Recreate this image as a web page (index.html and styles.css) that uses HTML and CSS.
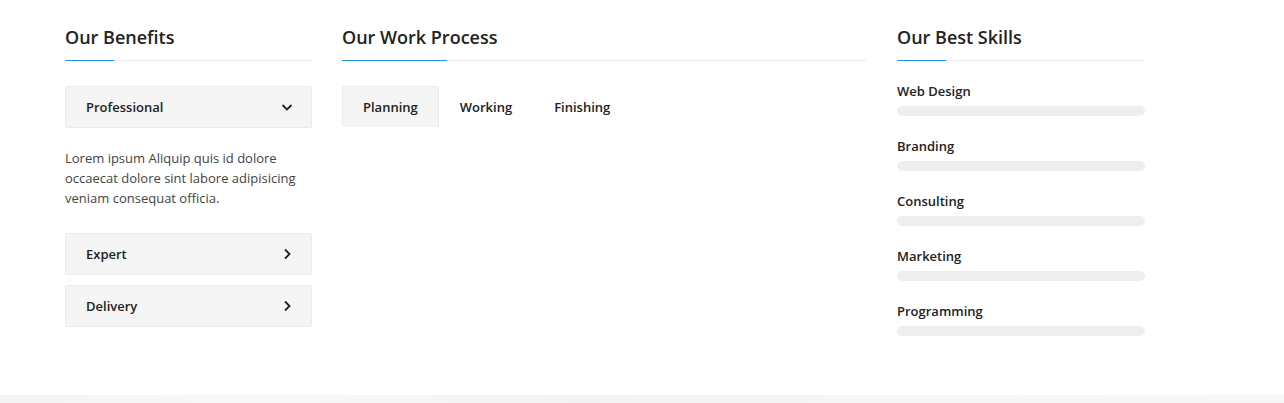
FILE: index.html
```html
<!DOCTYPE html>
<html>
<head>
<meta charset="utf-8">
<link rel="stylesheet" href="styles.css">
</head>
<body>
<section class="features">
  <div class="col col-benefits">
    <h3 class="title">Our Benefits</h3>
    <div class="acc-item open">
      <div class="acc-head"><span>Professional</span>
        <svg class="ico" width="14" height="14" viewBox="0 0 14 14"><path d="M2.5 5 L7 9.5 L11.5 5" fill="none" stroke="#222" stroke-width="1.8"/></svg>
      </div>
    </div>
    <p class="acc-body">Lorem ipsum Aliquip quis id dolore occaecat dolore sint labore adipisicing veniam consequat officia.</p>
    <div class="acc-item">
      <div class="acc-head"><span>Expert</span>
        <svg class="ico" width="14" height="14" viewBox="0 0 14 14"><path d="M5 2.5 L9.5 7 L5 11.5" fill="none" stroke="#222" stroke-width="1.8"/></svg>
      </div>
    </div>
    <div class="acc-item">
      <div class="acc-head"><span>Delivery</span>
        <svg class="ico" width="14" height="14" viewBox="0 0 14 14"><path d="M5 2.5 L9.5 7 L5 11.5" fill="none" stroke="#222" stroke-width="1.8"/></svg>
      </div>
    </div>
  </div>
  <div class="col col-process">
    <h3 class="title">Our Work Process</h3>
    <ul class="tabs">
      <li class="tab active">Planning</li>
      <li class="tab">Working</li>
      <li class="tab">Finishing</li>
    </ul>
  </div>
  <div class="col col-skills">
    <h3 class="title">Our Best Skills</h3>
    <div class="skill"><div class="skill-name">Web Design</div><div class="bar"></div></div>
    <div class="skill"><div class="skill-name">Branding</div><div class="bar"></div></div>
    <div class="skill"><div class="skill-name">Consulting</div><div class="bar"></div></div>
    <div class="skill"><div class="skill-name">Marketing</div><div class="bar"></div></div>
    <div class="skill"><div class="skill-name">Programming</div><div class="bar"></div></div>
  </div>
</section>
<div class="next-section"></div>
</body>
</html>
```
FILE: styles.css
```css
* { box-sizing: border-box; }
html, body { margin: 0; padding: 0; background: #fff; }
body {
  font-family: "Open Sans", "Liberation Sans", sans-serif;
  color: #222;
  height: 403px;
  overflow: hidden;
}
.features {
  display: grid;
  grid-template-columns: 247px 524px 249px;
  column-gap: 30px;
  padding: 25px 0 0 65px;
  height: 395px;
}
.col-skills { margin-left: 1px; }
.title {
  margin: 0 0 25px;
  font-size: 18px;
  font-weight: 600;
  line-height: 24px;
  color: #222;
  padding-bottom: 11px;
  border-bottom: 1px solid #ebebeb;
  position: relative;
}
.title::after {
  content: "";
  position: absolute;
  left: 0;
  bottom: -1px;
  width: 49px;
  height: 1px;
  background: #1e94e0;
}
.col-process .title::after { width: 105px; }
.acc-item {
  background: #f5f5f5;
  border: 1px solid #ebebeb;
  border-radius: 2px;
  margin-bottom: 10px;
}
.acc-head {
  height: 40px;
  display: flex;
  align-items: center;
  justify-content: space-between;
  padding: 0 17px 0 20px;
  font-size: 13px;
  font-weight: 600;
  color: #222;
}
.ico { display: block; }
.acc-item.open { margin-bottom: 0; }
.acc-body {
  margin: 20px 0 25px;
  font-size: 13px;
  line-height: 20px;
  color: #444;
}
.tabs {
  list-style: none;
  margin: 0;
  padding: 0;
  display: flex;
}
.tab {
  height: 41px;
  display: flex;
  align-items: center;
  padding: 0 20px;
  font-size: 13px;
  font-weight: 600;
  color: #222;
  border: 1px solid transparent;
  border-bottom: 0;
}
.tab.active {
  background: #f5f5f5;
  border-color: #ebebeb;
  border-radius: 2px 2px 0 0;
}
.skill { margin-bottom: 21px; }
.skill:first-of-type { margin-top: -4px; }
.skill-name {
  font-size: 13px;
  font-weight: 600;
  line-height: 18px;
  color: #222;
  margin-bottom: 6px;
}
.bar {
  height: 10px;
  border-radius: 5px;
  background: #eeeeee;
}
.next-section {
  height: 8px;
  background: linear-gradient(90deg, #f4f4f4 0%, #f8f8f8 20%, #f3f3f3 45%, #f6f6f6 70%, #f7f7f7 100%);
}
```
